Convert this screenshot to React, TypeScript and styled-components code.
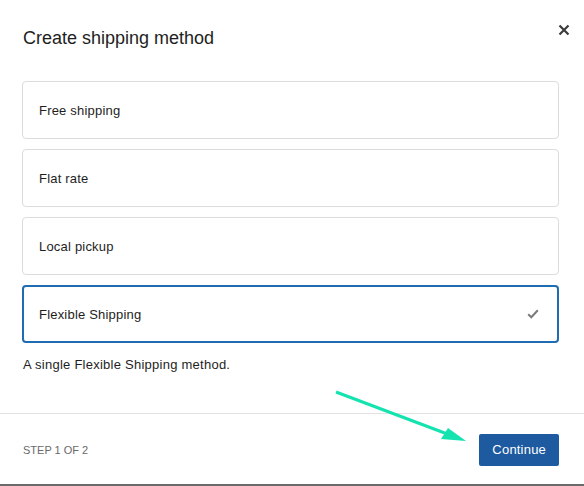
import React from 'react';
import styled, { createGlobalStyle } from 'styled-components';

const GlobalStyle = createGlobalStyle`
  html, body {
    margin: 0;
    padding: 0;
    background: #ffffff;
  }
  body {
    font-family: "Liberation Sans", Arial, sans-serif;
    color: #1e1e1e;
  }
`;

interface OptionType {
  label: string;
  selected?: boolean;
}

const options: OptionType[] = [
  { label: 'Free shipping' },
  { label: 'Flat rate' },
  { label: 'Local pickup' },
  { label: 'Flexible Shipping', selected: true },
];

const App = () => (
  <>
    <GlobalStyle />
    <Modal>
      <Header>
        <Title>Create shipping method</Title>
        <CloseButton aria-label="Close">
          <svg width="12" height="12" viewBox="0 0 12 12">
            <path
              d="M1.5 1.5 L10.5 10.5 M10.5 1.5 L1.5 10.5"
              stroke="#3c3c3c"
              strokeWidth="2.2"
              strokeLinecap="butt"
            />
          </svg>
        </CloseButton>
      </Header>
      <Body>
        <OptionList>
          {options.map((o) => (
            <Option key={o.label} selected={o.selected}>
              <OptionLabel>{o.label}</OptionLabel>
              {o.selected && (
                <svg width="12" height="10" viewBox="0 0 12 10">
                  <path
                    d="M1.2 5.2 L4.3 8.2 L10.8 1.2"
                    fill="none"
                    stroke="#7a7a7a"
                    strokeWidth="2"
                  />
                </svg>
              )}
            </Option>
          ))}
        </OptionList>
        <Description>A single Flexible Shipping method.</Description>
      </Body>
      <Footer>
        <StepText>Step 1 of 2</StepText>
        <ContinueButton>Continue</ContinueButton>
      </Footer>
      <Arrow width="140" height="56" viewBox="0 0 140 56">
        <line x1="2" y1="2" x2="116" y2="45" stroke="#14e3b0" strokeWidth="3" />
        <polygon points="132,51 107,49 114,38" fill="#14e3b0" />
      </Arrow>
    </Modal>
  </>
);

export default App;

const Modal = styled.div`
  position: relative;
  width: 584px;
  height: 486px;
  box-sizing: border-box;
  display: flex;
  flex-direction: column;
  border-bottom: 2px solid #6a6a6a;
  overflow: hidden;
`;

const Header = styled.div`
  display: flex;
  align-items: center;
  justify-content: space-between;
  height: 76px;
  padding: 0 8px 0 23px;
  box-sizing: border-box;
`;

const Title = styled.h1`
  margin: 0;
  font-size: 18px;
  font-weight: 400;
  color: #1e1e1e;
`;

const CloseButton = styled.button`
  display: flex;
  align-items: center;
  justify-content: center;
  width: 24px;
  height: 24px;
  padding: 0;
  margin-top: -17px;
  border: none;
  background: transparent;
  cursor: pointer;
`;

const Body = styled.div`
  display: flex;
  flex-direction: column;
  padding: 5px 25px 0 22px;
  height: 337px;
  box-sizing: border-box;
`;

const OptionList = styled.div`
  display: flex;
  flex-direction: column;
  gap: 10px;
`;

const Option = styled.div<{ selected?: boolean }>`
  display: flex;
  align-items: center;
  justify-content: space-between;
  height: 58px;
  box-sizing: border-box;
  padding: 0 18px 0 ${({ selected }) => (selected ? '15px' : '16px')};
  border: ${({ selected }) => (selected ? '2px solid #1f6cb0' : '1px solid #dcdcdc')};
  border-radius: 4px;
  background: #ffffff;
  cursor: pointer;
`;

const OptionLabel = styled.span`
  font-size: 13px;
  letter-spacing: 0.2px;
  color: #1e1e1e;
`;

const Description = styled.p`
  margin: 14px 0 0 1px;
  font-size: 13px;
  letter-spacing: 0.25px;
  color: #1e1e1e;
`;

const Footer = styled.div`
  flex: 1;
  display: flex;
  align-items: center;
  justify-content: space-between;
  padding: 0 25px 0 23px;
  border-top: 1px solid #e2e2e2;
`;

const StepText = styled.span`
  font-size: 11px;
  margin-top: 1px;
  text-transform: uppercase;
  color: #6a6a6a;
`;

const ContinueButton = styled.button`
  height: 32px;
  padding: 0 13px;
  margin-top: 1px;
  border: none;
  border-radius: 2px;
  background: #1d5aa0;
  color: #ffffff;
  font-family: "Liberation Sans", Arial, sans-serif;
  font-size: 13px;
  letter-spacing: 0.2px;
  cursor: pointer;
`;

const Arrow = styled.svg`
  position: absolute;
  left: 334px;
  top: 390px;
  pointer-events: none;
`;
